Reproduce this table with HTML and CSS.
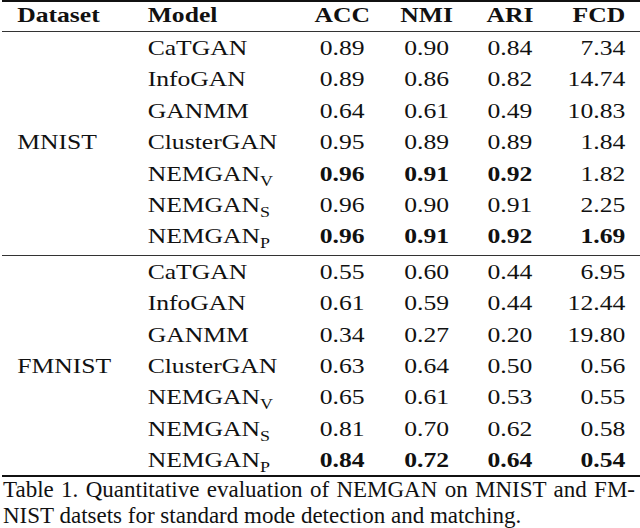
FILE: index.html
```html
<!DOCTYPE html>
<html>
<head>
<meta charset="utf-8">
<link rel="stylesheet" href="styles.css">
</head>
<body>
<div class="page">
  <div class="tbl">
    <div class="head grid">
      <div class="ds">Dataset</div>
      <div class="model">Model</div>
      <div class="num">ACC</div>
      <div class="num">NMI</div>
      <div class="num">ARI</div>
      <div class="fcd">FCD</div>
    </div>
    <div class="group grid">
      <div class="ds span">MNIST</div>
      <div class="model">CaTGAN</div><div class="num">0.89</div><div class="num">0.90</div><div class="num">0.84</div><div class="fcd">7.34</div>
      <div class="model">InfoGAN</div><div class="num">0.89</div><div class="num">0.86</div><div class="num">0.82</div><div class="fcd">14.74</div>
      <div class="model">GANMM</div><div class="num">0.64</div><div class="num">0.61</div><div class="num">0.49</div><div class="fcd">10.83</div>
      <div class="model">ClusterGAN</div><div class="num">0.95</div><div class="num">0.89</div><div class="num">0.89</div><div class="fcd">1.84</div>
      <div class="model">NEMGAN<sub>V</sub></div><div class="num b">0.96</div><div class="num b">0.91</div><div class="num b">0.92</div><div class="fcd">1.82</div>
      <div class="model">NEMGAN<sub>S</sub></div><div class="num">0.96</div><div class="num">0.90</div><div class="num">0.91</div><div class="fcd">2.25</div>
      <div class="model">NEMGAN<sub>P</sub></div><div class="num b">0.96</div><div class="num b">0.91</div><div class="num b">0.92</div><div class="fcd b">1.69</div>
    </div>
    <div class="group last grid">
      <div class="ds span">FMNIST</div>
      <div class="model">CaTGAN</div><div class="num">0.55</div><div class="num">0.60</div><div class="num">0.44</div><div class="fcd">6.95</div>
      <div class="model">InfoGAN</div><div class="num">0.61</div><div class="num">0.59</div><div class="num">0.44</div><div class="fcd">12.44</div>
      <div class="model">GANMM</div><div class="num">0.34</div><div class="num">0.27</div><div class="num">0.20</div><div class="fcd">19.80</div>
      <div class="model">ClusterGAN</div><div class="num">0.63</div><div class="num">0.64</div><div class="num">0.50</div><div class="fcd">0.56</div>
      <div class="model">NEMGAN<sub>V</sub></div><div class="num">0.65</div><div class="num">0.61</div><div class="num">0.53</div><div class="fcd">0.55</div>
      <div class="model">NEMGAN<sub>S</sub></div><div class="num">0.81</div><div class="num">0.70</div><div class="num">0.62</div><div class="fcd">0.58</div>
      <div class="model">NEMGAN<sub>P</sub></div><div class="num b">0.84</div><div class="num b">0.72</div><div class="num b">0.64</div><div class="fcd b">0.54</div>
    </div>
  </div>
  <p class="caption">Table 1. Quantitative evaluation of NEMGAN on MNIST and FM-NIST datsets for standard mode detection and matching.</p>
</div>
</body>
</html>
```

FILE: styles.css
```css
html, body {
  margin: 0;
  padding: 0;
  background: #fff;
}
body {
  width: 640px;
  height: 528px;
  overflow: hidden;
}
.page {
  font-family: "Liberation Serif", "Times New Roman", serif;
  color: #111;
}
.tbl {
  width: 548px;
  margin-left: 1.7px;
  transform: scaleX(1.165);
  transform-origin: 0 0;
  font-size: 22px;
  border-top: 2px solid #111;
  border-bottom: 2px solid #111;
}
.grid {
  display: grid;
  grid-template-columns: 125px 133px 68px 77px 66px 66px 13px;
}
.head {
  line-height: 26px;
  height: 29px;
  border-bottom: 1px solid #333;
  font-weight: bold;
}
.group {
  grid-auto-rows: 31.4px;
  line-height: 31.4px;
  padding-bottom: 3px;
  border-bottom: 1px solid #333;
}
.group.last {
  border-bottom: none;
  padding-bottom: 0;
}
.ds {
  grid-column: 1;
  padding-left: 13px;
  white-space: nowrap;
}
.span {
  grid-row: 1 / span 7;
  align-self: center;
}
.model {
  grid-column: 2;
  white-space: nowrap;
}
.num {
  text-align: center;
}
.fcd {
  text-align: right;
  grid-column: 6;
}
.b {
  font-weight: bold;
}
sub {
  font-size: 0.7em;
  vertical-align: -0.3em;
  line-height: 0;
}
.caption {
  width: 632px;
  margin: 0 0 0 3px;
  font-size: 23px;
  line-height: 25.5px;
  text-align: justify;
  hyphens: manual;
}
```
